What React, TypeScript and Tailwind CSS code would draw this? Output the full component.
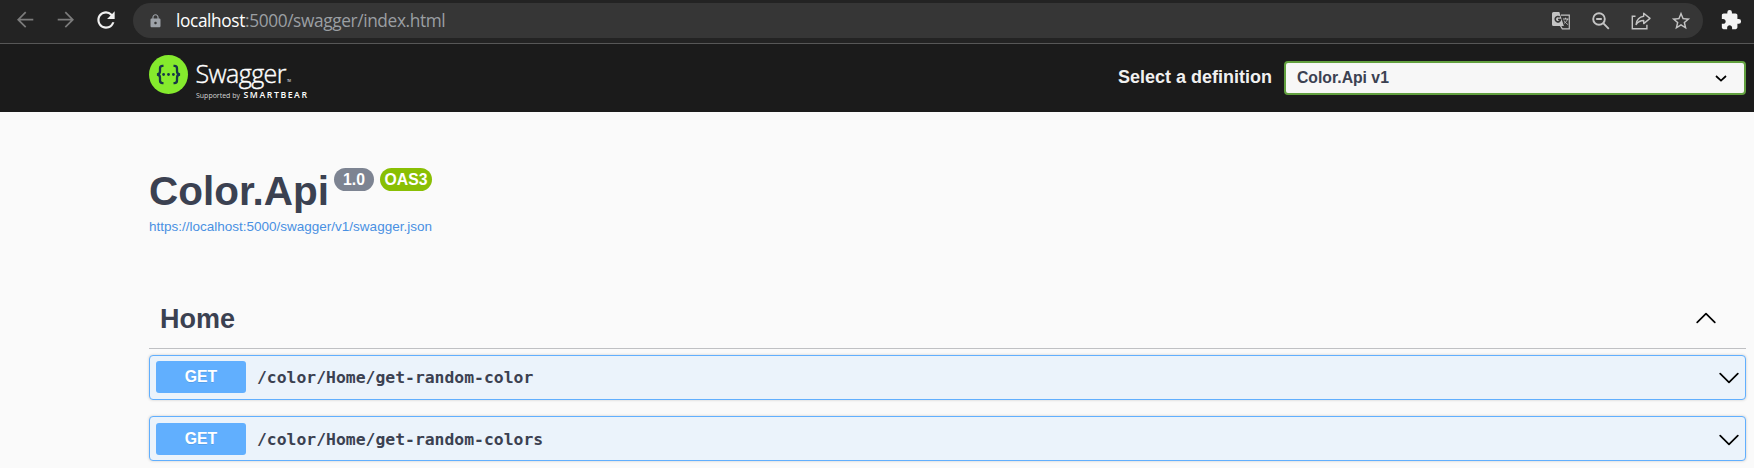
import type { ReactNode } from "react";
import { MdExtension, MdLock, MdRefresh, MdStarBorder } from "react-icons/md";

function BrowserBar() {
  return (
    <div className="flex h-11 items-start border-b border-[#575757] bg-[#232323] pt-[3px]">
      <svg className="ml-4 mt-2 h-[18px] w-[18px] shrink-0" viewBox="0 0 18 18" fill="none" stroke="#7b7b7b" strokeWidth="1.7">
        <path d="M17.3 8.7H2.5M9.7 1.2 2.2 8.7l7.5 7.5" />
      </svg>
      <svg className="ml-[23px] mt-2 h-[18px] w-[18px] shrink-0" viewBox="0 0 18 18" fill="none" stroke="#7b7b7b" strokeWidth="1.7">
        <path d="M.7 8.7h14.8M8.3 1.2l7.5 7.5-7.5 7.5" />
      </svg>
      <MdRefresh className="ml-[18px] mt-1 h-[26px] w-[26px] shrink-0 text-[#f1f1f1]" />
      <div className="ml-[14px] flex h-[35px] w-[1570px] shrink-0 items-center rounded-full bg-[#363636] pr-[11px] text-[#c4c4c4]">
        <MdLock className="ml-[15px] h-4 w-[15px] text-[#9da2a8]" />
        <div className="ml-[13px] grow whitespace-nowrap font-['Open_Sans',sans-serif] text-[17.3px] leading-[35px] tracking-[-0.38px] text-[#9b9fa3]">
          <span className="text-white">localhost</span>:5000/swagger/index.html
        </div>
        <svg className="h-[18px] w-[19px]" viewBox="0 0 19 18" fill="none">
          <path d="M9 3.2h8.3v13.6h-7l-1.8-3" stroke="currentColor" strokeWidth="1.2" />
          <path d="M1.500 0h5.800l4.600 14H1.500A1.500 1.500 0 0 1 0 12.500v-11A1.500 1.500 0 0 1 1.500 0z" fill="currentColor" />
          <path d="M7.800 5.200a2.700 2.700 0 1 0 .8 2.300H6" stroke="#363636" strokeWidth="1.600" />
          <path d="M11 7h5.500M13.500 5.700V7M15.500 7c-.5 2-2 3.500-3.300 4.300M12 8.500c.8 1.500 2 2.700 3.800 4" stroke="currentColor" />
        </svg>
        <svg className="ml-[21px] h-[18px] w-[18px]" viewBox="0 0 18 18" fill="none" stroke="currentColor" strokeWidth="1.900">
          <circle cx="7" cy="7" r="5.800" />
          <path d="m11.200 11.200 5.600 5.600M4.200 7h5.600" />
        </svg>
        <svg className="ml-[21px] h-[18px] w-5" viewBox="0 0 20 18" fill="none" stroke="currentColor" strokeWidth="1.4">
          <path d="M4.5 4.3H1.3v12.4h14.6v-4" />
          <path d="M12.7 1.2 19 6.4l-6.3 5.2V8.5c-3.6 0-5.6 1-7.6 4 .6-4.4 2.9-7.6 7.6-8.2z" strokeLinejoin="round" />
        </svg>
        <MdStarBorder className="ml-[19px] h-[22px] w-[22px]" />
      </div>
      <MdExtension className="ml-[17px] mt-[6px] h-[22px] w-[22px] shrink-0 text-[#f4f4f4]" />
    </div>
  );
}

function SwaggerLogo() {
  return (
    <svg className="h-[50px] w-[162px] shrink-0" viewBox="0 0 162 50">
      <circle cx="19.5" cy="19.5" r="19.5" fill="#85ea2d" />
      <g fill="none" stroke="#173647" strokeWidth="2.3">
        <path d="M14.5 10.9h-1c-1.8 0-2.5.8-2.5 2.6v2.8c0 1.900-.8 3-3 3.200 2.200.2 3 1.300 3 3.200v2.800c0 1.800.7 2.600 2.500 2.600h1" />
        <path d="M24.500 10.900h1c1.800 0 2.500.8 2.500 2.600v2.800c0 1.900.8 3 3 3.200-2.200.2-3 1.300-3 3.200v2.800c0 1.800-.7 2.600-2.500 2.600h-1" />
      </g>
      <g fill="#173647">
        <circle cx="14.600" cy="19.500" r="1.400" />
        <circle cx="19.500" cy="19.500" r="1.400" />
        <circle cx="24.400" cy="19.500" r="1.400" />
      </g>
      <g fill="#fff" className="font-['Open_Sans',sans-serif]">
        <text x="46.500" y="27.600" fontSize="25" fontWeight="300" textLength="91" stroke="#fff" strokeWidth=".4">Swagger</text>
        <text x="138" y="27.300" fontSize="3" textLength="4">TM</text>
        <text x="47" y="43" fontSize="7" textLength="44" fill="#d5d5d5">Supported by</text>
        <text x="94.500" y="43" fontSize="8.700" fontWeight="600" textLength="63.500">SMARTBEAR</text>
      </g>
    </svg>
  );
}

function Topbar() {
  return (
    <header className="flex h-[68px] items-start bg-[#1b1b1b] pl-[149px] pt-[11px]">
      <SwaggerLogo />
      <div className="ml-auto mr-2 mt-1.5 flex h-[34px] items-center">
        <label className="mr-[12px] mt-[-2px] whitespace-nowrap text-[18px] font-bold text-[#f0f0f0]">Select a definition</label>
        <div className="flex h-[34px] w-[462px] items-center justify-between rounded border-2 border-[#62a03f] bg-[#f7f7f7] pl-[11px] pr-[17px]">
          <span className="text-[15.750px] font-bold text-[#3b4151]">Color.Api v1</span>
          <svg className="h-[7px] w-3" viewBox="0 0 12 7" fill="none" stroke="#000" strokeWidth="1.700">
            <path d="m1 1 5 4.600L11 1" />
          </svg>
        </div>
      </div>
    </header>
  );
}

function Badge({ className, children }: { className: string; children: ReactNode }) {
  return (
    <span className={`flex h-[23px] items-center justify-center rounded-full text-[15.750px] font-bold leading-none text-white ${className}`}>
      {children}
    </span>
  );
}

function Chevron({ up = false }: { up?: boolean }) {
  return (
    <svg className="h-3 w-5 shrink-0" viewBox="0 0 20 12" fill="none" stroke="#000" strokeWidth="1.700" strokeLinecap="round" strokeLinejoin="round">
      <path d={up ? "m1.200 10.300 8.800-8.600 8.800 8.600" : "m1.200 1.700 8.800 8.600 8.800-8.600"} />
    </svg>
  );
}

function Operation({ path, className }: { path: string; className: string }) {
  return (
    <div className={`flex h-[45px] items-start rounded border border-[#61affe] bg-[#ebf3fb] pl-[6px] pr-[6px] shadow-[0_0_3px_rgba(0,0,0,0.19)] ${className}`}>
      <span className="flex h-8 w-[90px] items-center justify-center rounded-[3px] bg-[#61affe] pb-px text-[15.750px] font-bold text-white [text-shadow:0_1px_0_rgba(0,0,0,0.1)]">
        GET
      </span>
      <span className="ml-[11px] mt-px whitespace-nowrap font-['DejaVu_Sans_Mono',monospace] text-[16.400px] font-bold leading-8 text-[#3b4151]">{path}</span>
      <span className="ml-auto mt-[10.500px] flex">
        <Chevron />
      </span>
    </div>
  );
}

export default function App() {
  return (
    <div className="h-[468px] w-[1754px] overflow-hidden bg-[#fafafa] font-['Liberation_Sans',Arial,sans-serif]">
      <BrowserBar />
      <Topbar />
      <main className="pl-[149px] pr-2">
        <div className="flex h-[101px] items-start pt-14">
          <h1 className="w-[185px] whitespace-nowrap text-[40.500px] font-bold leading-[46px] text-[#3b4151]">Color.Api</h1>
          <Badge className="w-10 bg-[#7d8492]">1.0</Badge>
          <Badge className="ml-1.5 w-[52px] bg-[#89bf04]">OAS3</Badge>
        </div>
        <a className="block h-[73px] whitespace-nowrap pt-[5px] text-[13.500px] leading-[18px] text-[#4990e2]">
          https://localhost:5000/swagger/v1/swagger.json
        </a>
        <div className="flex h-[63px] items-start justify-between border-b border-[#bfc0c3] pl-[11px] pr-[30px] pt-[16px]">
          <h2 className="mt-px text-[27px] font-bold leading-[32px] text-[#3b4151]">Home</h2>
          <span className="mt-[9.500px] flex">
            <Chevron up />
          </span>
        </div>
        <Operation path="/color/Home/get-random-color" className="mt-[6px] pt-[5px]" />
        <Operation path="/color/Home/get-random-colors" className="mt-4 pt-[6px]" />
      </main>
    </div>
  );
}
